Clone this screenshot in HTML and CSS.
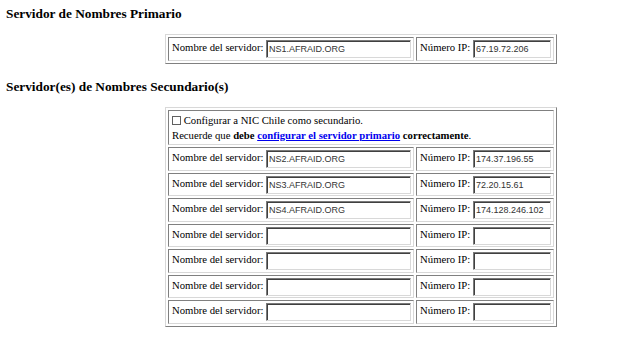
FILE: index.html
```html
<!DOCTYPE html>
<html lang="es">
<head>
  <meta charset="UTF-8" />
  <title>Servidores de Nombres</title>
  <link rel="stylesheet" href="styles.css">
</head>
<body>
  <h3 class="title">Servidor de Nombres Primario</h3>
  <table class="dns">
    <tr>
      <td class="name">Nombre del servidor: <input type="text" class="host" value="NS1.AFRAID.ORG"></td>
      <td class="ip">Número IP: <input type="text" class="addr" value="67.19.72.206"></td>
    </tr>
  </table>

  <h3 class="title">Servidor(es) de Nombres Secundario(s)</h3>
  <table class="dns">
    <tr>
      <td colspan="2" class="note">
        <span class="box"></span> Configurar a NIC Chile como secundario.<br>
        Recuerde que <b>debe <a href="#">configurar el servidor primario</a> correctamente</b>.
      </td>
    </tr>
    <tr>
      <td class="name">Nombre del servidor: <input type="text" class="host" value="NS2.AFRAID.ORG"></td>
      <td class="ip">Número IP: <input type="text" class="addr" value="174.37.196.55"></td>
    </tr>
    <tr>
      <td class="name">Nombre del servidor: <input type="text" class="host" value="NS3.AFRAID.ORG"></td>
      <td class="ip">Número IP: <input type="text" class="addr" value="72.20.15.61"></td>
    </tr>
    <tr>
      <td class="name">Nombre del servidor: <input type="text" class="host" value="NS4.AFRAID.ORG"></td>
      <td class="ip">Número IP: <input type="text" class="addr" value="174.128.246.102"></td>
    </tr>
    <tr>
      <td class="name">Nombre del servidor: <input type="text" class="host"></td>
      <td class="ip">Número IP: <input type="text" class="addr"></td>
    </tr>
    <tr>
      <td class="name">Nombre del servidor: <input type="text" class="host"></td>
      <td class="ip">Número IP: <input type="text" class="addr"></td>
    </tr>
    <tr>
      <td class="name">Nombre del servidor: <input type="text" class="host"></td>
      <td class="ip">Número IP: <input type="text" class="addr"></td>
    </tr>
    <tr>
      <td class="name">Nombre del servidor: <input type="text" class="host"></td>
      <td class="ip">Número IP: <input type="text" class="addr"></td>
    </tr>
  </table>
</body>
</html>
```

FILE: styles.css
```css
html, body {
  margin: 0;
  padding: 0;
  background: #fff;
}
body {
  padding: 6px 6px;
  font-family: 'Liberation Serif', 'Times New Roman', serif;
  font-size: 10.7px;
  color: #000;
}
.title {
  font-size: 13.3px;
  font-weight: bold;
  margin: 0 0 12px;
  line-height: 16px;
}
.dns {
  margin: 0 0 15px 159px;
  width: 392px;
  border-collapse: separate;
  border-spacing: 2px;
  border: 1px solid #a0a0a0;
  border-color: #d8d8d8 #808080 #808080 #d8d8d8;
}
.dns td {
  border: 1px solid #a0a0a0;
  border-color: #808080 #d8d8d8 #d8d8d8 #808080;
  padding: 2px 2px 1.5px 3px;
  height: 17px;
  white-space: nowrap;
}
.dns .name {
  width: 237px;
}
.dns input {
  font-family: 'Liberation Sans', Arial, sans-serif;
  font-size: 9px;
  color: #333;
  height: 18px;
  box-sizing: border-box;
  padding: 0 1px 0 2px;
  border: 1px solid #808080;
  border-color: #7a7a7a #d8d8d8 #d8d8d8 #7a7a7a;
  box-shadow: inset 1px 1px 0 #404040;
  vertical-align: middle;
  margin: 0;
}
.host {
  width: 145px;
}
.addr {
  width: 78px;
}
.note {
  line-height: 15px;
  padding: 2px 3px 3px 6px;
}
.note a {
  color: #0000ee;
}
.box {
  display: inline-block;
  width: 7px;
  height: 7px;
  border: 1px solid #606060;
  vertical-align: -1px;
}
```
